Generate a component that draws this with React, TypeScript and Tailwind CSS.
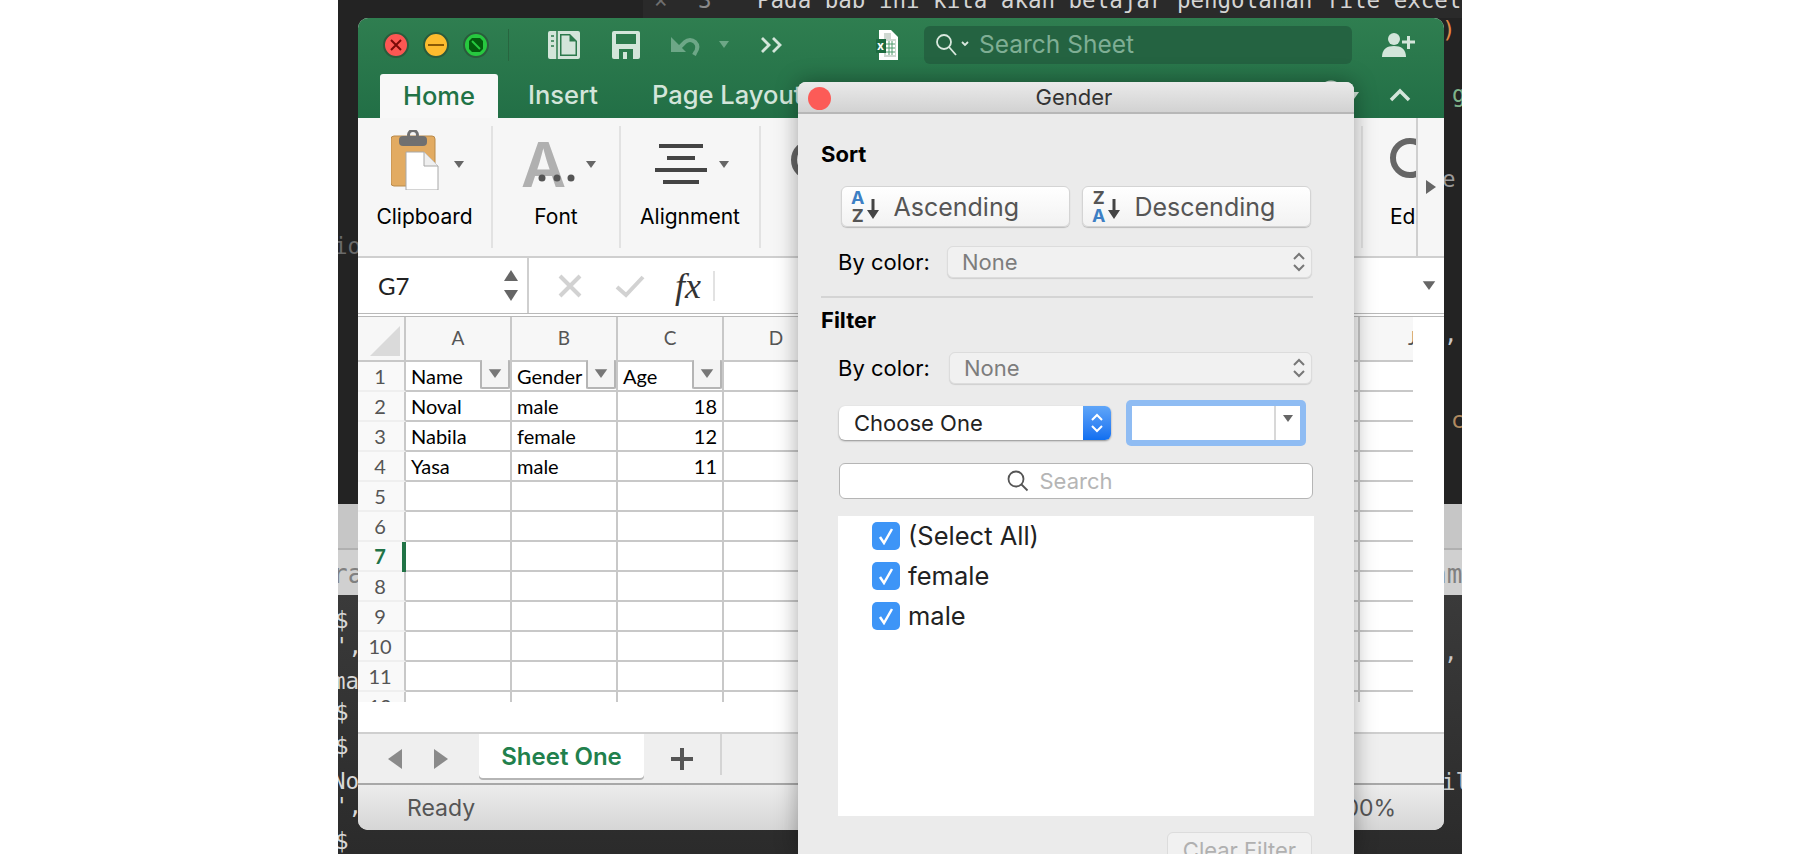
const uiFont = "font-['Inter','Liberation_Sans',sans-serif]";
const cellFont = "font-['Lato','Open_Sans',sans-serif]";
const codeFont = "font-['DejaVu_Sans_Mono','Liberation_Mono',monospace]";

const columns = ["A", "B", "C", "D", "E", "F", "G", "H", "I", "J"];
const rows: { n: number; a?: string; b?: string; c?: string }[] = [
  { n: 1, a: "Name", b: "Gender", c: "Age" },
  { n: 2, a: "Noval", b: "male", c: "18" },
  { n: 3, a: "Nabila", b: "female", c: "12" },
  { n: 4, a: "Yasa", b: "male", c: "11" },
  { n: 5 }, { n: 6 }, { n: 7 }, { n: 8 }, { n: 9 }, { n: 10 }, { n: 11 }, { n: 12 },
];

const codeBits = [
  { text: "×", cls: "left-[316px] top-[-14px] text-[#6f6f6f]" },
  { text: "3", cls: "left-[360px] top-[-14px] text-[#8a8a8a]" },
  { text: "Pada bab ini kita akan belajar pengolahan file excel", cls: "left-[419px] top-[-14px] text-[#d4d4d4]" },
  { text: ")", cls: "left-[1104px] top-[16px] text-[#e08a45]" },
  { text: "g", cls: "left-[1114px] top-[80px] text-[#7fb38a]" },
  { text: "e", cls: "left-[1104px] top-[165px] text-[#9a9a9a]" },
  { text: ",", cls: "left-[1106px] top-[320px] text-[#c8c8c8]" },
  { text: "c", cls: "left-[1113px] top-[406px] text-[#b08a60]" },
  { text: "am", cls: "left-[1093px] top-[560px] text-[26px] text-[#808080]" },
  { text: ",", cls: "left-[1106px] top-[638px] text-[#c8c8c8]" },
  { text: "il", cls: "left-[1104px] top-[768px] text-[#c8c8c8]" },
  { text: "io", cls: "left-[-4px] top-[232px] text-[#6a6a6a]" },
  { text: "ra", cls: "left-[-6px] top-[560px] text-[26px] text-[#808080]" },
  { text: "$", cls: "left-[-3px] top-[606px] text-[#d8d8d8]" },
  { text: "',", cls: "left-[-3px] top-[632px] text-[#d8d8d8]" },
  { text: "ma", cls: "left-[-6px] top-[667px] text-[#d8d8d8]" },
  { text: "$", cls: "left-[-3px] top-[698px] text-[#d8d8d8]" },
  { text: "$", cls: "left-[-3px] top-[732px] text-[#d8d8d8]" },
  { text: "No", cls: "left-[-6px] top-[767px] text-[#d8d8d8]" },
  { text: "',", cls: "left-[-3px] top-[792px] text-[#d8d8d8]" },
  { text: "$", cls: "left-[-3px] top-[827px] text-[#d8d8d8]" },
];

function Caret({ color = "#666", className = "" }: { color?: string; className?: string }) {
  return (
    <svg width="12" height="9" viewBox="0 0 12 9" className={className}>
      <path d="M1 1h10L6 8z" fill={color} />
    </svg>
  );
}

function Updown({ color = "#777" }: { color?: string }) {
  return (
    <svg width="14" height="22" viewBox="0 0 14 22" fill="none" stroke={color} strokeWidth="2">
      <path d="M2 8l5-5 5 5M2 14l5 5 5-5" />
    </svg>
  );
}

function TrafficLights() {
  return (
    <div className="flex items-center gap-[14px]">
      <div className="flex h-[26px] w-[26px] items-center justify-center rounded-full border-2 border-[#2a5c3c] bg-[#fc5753]">
        <svg width="12" height="12" viewBox="0 0 12 12" stroke="#7a0a08" strokeWidth="2">
          <path d="M1 1l10 10M11 1L1 11" />
        </svg>
      </div>
      <div className="flex h-[26px] w-[26px] items-center justify-center rounded-full border-2 border-[#2a5c3c] bg-[#fdbc2e]">
        <div className="h-[2px] w-[16px] bg-[#8a5a05]" />
      </div>
      <div className="flex h-[26px] w-[26px] items-center justify-center rounded-full border-2 border-[#2a5c3c] bg-[#27c83f]">
        <svg width="16" height="16" viewBox="0 0 16 16">
          <path d="M4 1h8l3 3v8l-3 3H4l-3-3V4z" fill="#035c0d" />
          <path d="M4 4l8 8" stroke="#27c83f" strokeWidth="2" />
        </svg>
      </div>
    </div>
  );
}

function TitleBar() {
  return (
    <div className="flex h-[52px] items-center pl-[25px] pt-[1px]">
      <TrafficLights />
      <div className="ml-[19px] h-[32px] w-[1px] bg-[#27653f]" />
      {/* sidebar doc */}
      <svg width="32" height="28" viewBox="0 0 32 28" className="ml-[39px]">
        <rect x="0" y="0" width="32" height="28" rx="2" fill="#d3e5da" />
        <path d="M9 0v28" stroke="#2c7a4d" strokeWidth="1.5" />
        <path d="M3 5h3M3 10h3M3 15h3" stroke="#2c7a4d" strokeWidth="1.5" />
        <path d="M12 3h10l7 7v15H12z" fill="#2c7a4d" />
        <path d="M13.5 4.500h8v6h6v13h-14z" fill="#d3e5da" />
      </svg>
      {/* save */}
      <svg width="28" height="28" viewBox="0 0 28 28" className="ml-[32px]">
        <path d="M2 0h24a2 2 0 012 2v24a2 2 0 01-2 2H2a2 2 0 01-2-2V2a2 2 0 012-2z" fill="#d3e5da" />
        <rect x="4" y="3" width="20" height="10" fill="#2c7a4d" />
        <rect x="7" y="18" width="14" height="10" fill="#2c7a4d" />
        <rect x="11" y="21" width="4" height="7" fill="#d3e5da" />
      </svg>
      {/* undo */}
      <svg width="32" height="24" viewBox="0 0 32 24" fill="none" className="ml-[31px]">
        <path d="M8 15l6-6a7 7 0 0110 0c3 3 3 7 0 11l-1 2" stroke="#6da787" strokeWidth="4" />
        <path d="M0 4v15h15z" fill="#6da787" />
      </svg>
      <Caret color="#6da787" className="ml-[15px]" />
      {/* overflow chevrons */}
      <svg width="24" height="18" viewBox="0 0 24 18" fill="none" stroke="#d3e5da" strokeWidth="2.800" className="ml-[30px]">
        <path d="M2 2l7 7-7 7M13 2l7 7-7 7" />
      </svg>
      {/* excel document */}
      <div className="relative ml-[92px] h-[30px] w-[22px]">
        <svg width="22" height="30" viewBox="0 0 22 30">
          <path d="M3 0h12l7 7v23H3z" fill="#fff" />
          <path d="M8 3h7v6h5v18H8z" fill="#cfd8d2" />
          <path d="M10 11h9v14h-9z" fill="#fff" />
          <path d="M10 14h9M10 18h9M10 22h9M13 11v14M16 11v14" stroke="#4f9a6d" strokeWidth="1" />
          <rect x="0" y="9" width="10" height="14" fill="#1d6b40" />
        </svg>
        <span className={`absolute left-[1px] top-[9px] text-[12px] font-bold leading-[14px] text-white ${uiFont}`}>x</span>
      </div>
      {/* search */}
      <div className="ml-[26px] flex h-[38px] w-[428px] items-center rounded-[6px] bg-[#246341] pl-[11px]">
        <svg width="36" height="24" viewBox="0 0 36 24" fill="none" stroke="#d9e8de" strokeWidth="1.800">
          <circle cx="9" cy="9" r="7" />
          <path d="M14 14l7 8" />
          <path d="M27 9l3 3 3-3" />
        </svg>
        <span className={`ml-[8px] text-[24.500px] leading-none text-[#7fae94] ${uiFont}`}>Search Sheet</span>
      </div>
      {/* share */}
      <svg width="34" height="26" viewBox="0 0 34 26" className="ml-[30px]">
        <circle cx="12" cy="7" r="6" fill="#d3e5da" />
        <path d="M0 25c0-8 5-11 12-11s12 3 12 11z" fill="#d3e5da" />
        <path d="M20 10h13M26.500 4v13" stroke="#d3e5da" strokeWidth="3" />
      </svg>
    </div>
  );
}

function RibbonTabs() {
  return (
    <div className="relative flex h-[48px] items-end pl-[22px]">
      <div className={`flex h-[44px] w-[118px] items-center justify-center rounded-t-[3px] bg-[#f8f8f8] text-[25.500px] font-medium text-[#217346] ${uiFont}`}>Home</div>
      <span className={`ml-[30px] mb-[4px] text-[25.500px] font-medium text-[#d3e5da] ${uiFont}`}>Insert</span>
      <span className={`ml-[54px] mb-[4px] whitespace-nowrap text-[25.500px] font-medium text-[#d3e5da] ${uiFont}`}>Page Layout</span>
      <div className="ml-auto mb-[12px] flex items-center">
        <svg width="26" height="26" viewBox="0 0 26 26" fill="none" stroke="#d3e5da" strokeWidth="3" className="mr-[4px] -mt-[4px]">
          <circle cx="13" cy="13" r="11" />
        </svg>
        <Caret color="#d3e5da" className="mr-[28px]" />
        <svg width="24" height="14" viewBox="0 0 24 14" fill="none" stroke="#d3e5da" strokeWidth="3.500" className="mr-[32px]">
          <path d="M3 12l9-9 9 9" />
        </svg>
      </div>
    </div>
  );
}

function RibbonLabel({ children }: { children: React.ReactNode }) {
  return <div className={`absolute bottom-[19px] left-0 right-0 text-center text-[21px] leading-[24px] text-black ${uiFont}`}>{children}</div>;
}

function Ribbon() {
  return (
    <div className="flex h-[140px] border-b-2 border-[#cfcfcf] bg-[#f6f6f6] py-[8px]">
      <div className="relative w-[135px] border-r-2 border-[#e2e2e2]">
        {/* clipboard */}
        <svg width="50" height="60" viewBox="0 0 50 60" className="absolute left-[33px] top-[4px]">
          <rect x="0" y="6" width="44" height="50" rx="3" fill="#e2ab62" stroke="#b98a4a" />
          <rect x="8" y="6" width="28" height="10" rx="4" fill="#707070" />
          <circle cx="22" cy="5" r="4.500" fill="none" stroke="#707070" strokeWidth="3" />
          <path d="M15 22h18l14 14v24H15z" fill="#fff" stroke="#a8a8a8" />
          <path d="M33 22v14h14" fill="#efefef" stroke="#a8a8a8" />
        </svg>
        <Caret className="absolute left-[95px] top-[34px]" />
        <RibbonLabel>Clipboard</RibbonLabel>
      </div>
      <div className="relative w-[128px] border-r-2 border-[#e2e2e2]">
        <span className={`absolute left-[28px] top-[4px] text-[62px] font-semibold leading-[70px] text-[#b0b0b0] ${uiFont}`}>A</span>
        <svg width="38" height="10" viewBox="0 0 38 10" className="absolute left-[45px] top-[47px]">
          <circle cx="4" cy="5" r="3.500" fill="#555" /><circle cx="19" cy="5" r="3.500" fill="#555" /><circle cx="33" cy="5" r="3.500" fill="#555" />
        </svg>
        <Caret className="absolute left-[92px] top-[34px]" />
        <RibbonLabel>Font</RibbonLabel>
      </div>
      <div className="relative w-[140px] border-r-2 border-[#e2e2e2]">
        <svg width="52" height="42" viewBox="0 0 52 42" className="absolute left-[34px] top-[18px]">
          <path d="M4 2h44M12 14h28M0 26h52M8 38h36" stroke="#444" strokeWidth="4" />
        </svg>
        <Caret className="absolute left-[97px] top-[34px]" />
        <RibbonLabel>Alignment</RibbonLabel>
      </div>
      <div className="relative w-[60px]">
        <div className="absolute left-[30px] top-[14px] h-[40px] w-[40px] rounded-full border-[6px] border-[#666]" />
        <RibbonLabel><span className="pl-[40px]">N</span></RibbonLabel>
      </div>
      <div className="flex-1" />
      <div className="relative w-[55px] overflow-hidden border-l-2 border-[#e2e2e2]">
        <div className="absolute left-[27px] top-[12px] h-[40px] w-[40px] rounded-full border-[6px] border-[#666]" />
        <div className={`absolute bottom-[19px] left-[27px] text-[21px] leading-[24px] text-black ${uiFont}`}>Ed</div>
      </div>
      <div className="-my-[8px] flex w-[28px] items-center justify-center border-l-2 border-[#cfcfcf]">
        <svg width="12" height="14" viewBox="0 0 12 14"><path d="M1 0l10 7-10 7z" fill="#666" /></svg>
      </div>
    </div>
  );
}

function FormulaBar() {
  return (
    <div className="flex h-[59px] border-b-[4px] border-double border-[#b9b9b9] bg-white">
      <div className="flex w-[171px] items-center justify-between border-r-2 border-[#cfcfcf] pl-[20px] pr-[9px]">
        <span className={`text-[24px] text-[#222] ${cellFont}`}>G7</span>
        <div className="flex flex-col gap-[9px]">
          <svg width="14" height="11" viewBox="0 0 14 11"><path d="M7 0l7 11H0z" fill="#666" /></svg>
          <svg width="14" height="11" viewBox="0 0 14 11"><path d="M0 0h14L7 11z" fill="#666" /></svg>
        </div>
      </div>
      <div className="flex flex-1 items-center pl-[29px]">
        <svg width="24" height="24" viewBox="0 0 24 24" stroke="#d2d2d2" strokeWidth="4"><path d="M2 2l20 20M22 2L2 22" /></svg>
        <svg width="30" height="24" viewBox="0 0 30 24" fill="none" stroke="#d2d2d2" strokeWidth="4" className="ml-[33px]"><path d="M2 13l9 8L28 3" /></svg>
        <span className="ml-[30px] font-['Liberation_Serif',serif] text-[36px] font-medium italic leading-none text-[#333]">fx</span>
        <div className="ml-[12px] h-[30px] w-[2px] bg-[#e2e2e2]" />
        <Caret className="ml-auto mr-[9px] scale-125" />
      </div>
    </div>
  );
}

function FilterButton() {
  return (
    <div className="absolute bottom-[1px] right-0 flex h-[29px] w-[30px] items-center justify-center rounded-[2px] border-2 border-t-0 border-[#b5b5b5] bg-[#f4f4f4]">
      <Caret color="#777" className="scale-125" />
    </div>
  );
}

function Sheet() {
  return (
    <div className="h-[415px] bg-white">
      <div className="h-[385px] w-[1055px] overflow-hidden">
        <div className="flex h-[45px]">
          <div className="flex w-[48px] shrink-0 items-end justify-end border-r-2 border-b-2 border-[#c8c8c8] bg-[#f7f7f7] pb-[4px] pr-[4px]">
            <svg width="30" height="30" viewBox="0 0 30 30"><path d="M30 0v30H0z" fill="#dadada" /></svg>
          </div>
          {columns.map((c) => (
            <div key={c} className={`flex w-[106px] shrink-0 items-center justify-center border-r-2 border-b-2 border-[#c8c8c8] bg-[#f7f7f7] text-[19px] text-[#555] ${cellFont}`}>{c}</div>
          ))}
        </div>
        {rows.map((r) => (
          <div key={r.n} className={`flex h-[30px] text-[20px] leading-[28px] text-black ${cellFont}`}>
            <div className={`relative w-[48px] shrink-0 border-r-2 border-b-2 border-r-[#c8c8c8] border-b-[#efefef] bg-[#f9f9f9] pr-[10px] text-center ${r.n === 7 ? "font-bold text-[#217346]" : "text-[#555]"}`}>
              <span className="block pl-[8px]">{r.n}</span>
              {r.n === 7 && <div className="absolute -right-[2px] top-0 h-[30px] w-[4px] bg-[#217346]" />}
            </div>
            {columns.map((c, i) => (
              <div key={c} className="relative w-[106px] shrink-0 border-r-2 border-b-2 border-[#c8c8c8] px-[5px]">
                {i === 0 && r.a}
                {i === 1 && r.b}
                {i === 2 && <span className={r.n > 1 ? "block text-right" : ""}>{r.c}</span>}
                {r.n === 1 && i < 3 && <FilterButton />}
              </div>
            ))}
          </div>
        ))}
      </div>
    </div>
  );
}

function TabStrip() {
  return (
    <div className="flex h-[53px] border-y-2 border-t-[#cfcfcf] border-b-[#a8a8a8] bg-[#efefef]">
      <div className="flex w-[121px] items-center pl-[30px]">
        <svg width="14" height="20" viewBox="0 0 14 20"><path d="M14 0v20L0 10z" fill="#8a8a8a" /></svg>
        <svg width="14" height="20" viewBox="0 0 14 20" className="ml-[32px]"><path d="M0 0v20l14-10z" fill="#8a8a8a" /></svg>
      </div>
      <div className={`flex h-[44px] w-[165px] items-center justify-center rounded-b-[4px] bg-white pt-[2px] text-[24px] font-semibold text-[#21804c] shadow-[0_2px_0_#b5b5b5] ${uiFont}`}>Sheet One</div>
      <div className="flex w-[76px] items-center justify-center">
        <svg width="22" height="22" viewBox="0 0 22 22"><path d="M11 0v22M0 11h22" stroke="#555" strokeWidth="4" /></svg>
      </div>
      <div className="mb-[8px] w-[2px] bg-[#d4d4d4]" />
    </div>
  );
}

function StatusBar() {
  return (
    <div className={`flex h-[45px] items-center justify-between bg-gradient-to-b from-[#ececec] to-[#d6d6d6] pl-[49px] pr-[48px] pt-[2px] text-[23px] text-[#555] ${uiFont}`}>
      <span>Ready</span>
      <span>100%</span>
    </div>
  );
}

function ExcelWindow() {
  return (
    <div className="absolute left-[20px] top-[18px] h-[812px] w-[1086px] overflow-hidden rounded-[10px] bg-white">
      <div className="bg-gradient-to-b from-[#2f7e50] to-[#226f46]">
        <TitleBar />
        <RibbonTabs />
      </div>
      <Ribbon />
      <FormulaBar />
      <Sheet />
      <TabStrip />
      <StatusBar />
    </div>
  );
}

function SortButton({ first, second, label }: { first: string; second: string; label: string }) {
  const letter = "font-bold leading-[18px] text-[18px] " + uiFont;
  return (
    <div className="flex h-[41px] w-[229px] items-center rounded-[6px] border border-[#d4d4d4] bg-gradient-to-b from-white to-[#f2f2f2] pl-[9px] shadow-[0_1px_1px_rgba(0,0,0,0.2)]">
      <div className="flex flex-col items-center">
        <span className={`${letter} ${first === "A" ? "text-[#3d7fc4]" : "text-[#555]"}`}>{first}</span>
        <span className={`${letter} ${second === "A" ? "text-[#3d7fc4]" : "text-[#555]"}`}>{second}</span>
      </div>
      <svg width="12" height="20" viewBox="0 0 12 20" className="ml-[3px] mt-[4px]">
        <path d="M4.500 0h3v11H12l-6 9-6-9h4.500z" fill="#444" />
      </svg>
      <span className={`ml-[14px] pt-[2px] text-[25px] text-[#555] ${uiFont}`}>{label}</span>
    </div>
  );
}

function ColorRow({ selectWidth }: { selectWidth: string }) {
  return (
    <div className="flex items-center justify-between pl-[17px] pr-[1px]">
      <span className={`text-[22px] leading-[32px] text-black ${uiFont}`}>By color:</span>
      <div className={`flex h-[32px] ${selectWidth} items-center justify-between rounded-[6px] border border-[#dcdcdc] bg-[#f1f1f1] pl-[14px] pr-[5px] shadow-[0_1px_1px_rgba(0,0,0,0.12)]`}>
        <span className={`text-[22px] text-[#7d7d7d] ${uiFont}`}>None</span>
        <Updown />
      </div>
    </div>
  );
}

function CheckRow({ label }: { label: string }) {
  return (
    <div className="flex h-[28px] items-center">
      <div className="flex h-[28px] w-[28px] items-center justify-center rounded-[5px] bg-[#3d95f7]">
        <svg width="18" height="18" viewBox="0 0 18 18" fill="none" stroke="#fff" strokeWidth="2.500"><path d="M3 10l4 6 8-14" /></svg>
      </div>
      <span className={`ml-[8px] text-[25.500px] leading-none text-[#222] ${uiFont}`}>{label}</span>
    </div>
  );
}

function FilterDialog() {
  return (
    <div className="absolute left-[460px] top-[82px] h-[772px] w-[556px] rounded-t-[8px] bg-[#ebebeb] shadow-[0_0_22px_rgba(0,0,0,0.35)]">
      <div className="relative flex h-[32px] items-center justify-center rounded-t-[8px] border-b-2 border-[#b7b7b7] bg-gradient-to-b from-[#eaeaea] to-[#d2d2d2]">
        <div className="absolute left-[10px] top-[5px] h-[23px] w-[23px] rounded-full bg-[#fc5b57]" />
        <span className={`-ml-[4px] text-[22px] leading-[30px] text-[#333] ${uiFont}`}>Gender</span>
      </div>
      <div className="pl-[23px] pr-[41px]">
        <div className={`mt-[28px] text-[22px] font-bold leading-[24px] text-black ${uiFont}`}>Sort</div>
        <div className="mt-[20px] flex justify-between pl-[20px] pr-[2px]">
          <SortButton first="A" second="Z" label="Ascending" />
          <SortButton first="Z" second="A" label="Descending" />
        </div>
        <div className="mt-[19px]">
          <ColorRow selectWidth="w-[365px]" />
        </div>
        <div className="mt-[18px] h-[2px] bg-[#d4d4d4]" />
        <div className={`mt-[10px] text-[22px] font-bold leading-[24px] text-black ${uiFont}`}>Filter</div>
        <div className="mt-[20px]">
          <ColorRow selectWidth="w-[363px]" />
        </div>
        <div className="mt-[16px] flex items-center pl-[18px]">
          <div className="flex h-[34px] w-[272px] items-center justify-between rounded-[6px] bg-white pl-[15px] shadow-[0_1px_2px_rgba(0,0,0,0.4)]">
            <span className={`text-[22px] text-[#222] ${uiFont}`}>Choose One</span>
            <div className="flex h-[34px] w-[28px] items-center justify-center rounded-r-[6px] bg-gradient-to-b from-[#5fa5f8] to-[#0f6ff0]">
              <Updown color="#fff" />
            </div>
          </div>
          <div className="ml-[15px] flex h-[46px] w-[180px] rounded-[5px] bg-[#8fbcf3] p-[6px]">
            <div className="flex-1 bg-white" />
            <div className="flex w-[26px] justify-center border-l-2 border-[#d8d8d8] bg-white pt-[8px]">
              <Caret />
            </div>
          </div>
        </div>
        <div className="ml-[18px] mt-[17px] flex h-[36px] w-[474px] items-center justify-center rounded-[6px] border border-[#b5b5b5] bg-white pr-[32px]">
          <svg width="22" height="22" viewBox="0 0 22 22" fill="none" stroke="#555" strokeWidth="1.800">
            <circle cx="9" cy="9" r="7.500" />
            <path d="M14.500 14.500l6 6" />
          </svg>
          <span className={`ml-[10px] text-[22px] text-[#b5b5b5] ${uiFont}`}>Search</span>
        </div>
        <div className="ml-[17px] mt-[17px] flex h-[300px] w-[476px] flex-col gap-[12px] bg-white pl-[34px] pt-[6px]">
          <CheckRow label="(Select All)" />
          <CheckRow label="female" />
          <CheckRow label="male" />
        </div>
        <div className="mt-[16px] flex justify-end pr-[1px]">
          <div className={`flex h-[36px] w-[145px] items-center justify-center rounded-[6px] border border-[#dcdcdc] bg-[#f1f1f1] text-[22px] text-[#b0b0b0] ${uiFont}`}>Clear Filter</div>
        </div>
      </div>
    </div>
  );
}

export default function App() {
  return (
    <div className="h-[854px] w-full overflow-hidden bg-white">
      <div className="relative mx-auto flex h-[854px] w-[1124px] flex-col overflow-hidden">
        <div className="h-[504px] bg-[#232323]">
          <div className="ml-[305px] h-[18px] bg-[#2a2a2a]" />
        </div>
        <div className="h-[46px] border-b-2 border-[#b0b0b0] bg-[#c6c6c6]" />
        <div className="h-[45px] bg-[#d0d0d0]" />
        <div className="flex-1 bg-gradient-to-b from-[#3a3a3a] to-[#2b2b2b]" />
        {codeBits.map((b, i) => (
          <span key={i} className={`absolute whitespace-pre text-[22.500px] leading-[28px] ${codeFont} ${b.cls}`}>{b.text}</span>
        ))}
        <ExcelWindow />
        <FilterDialog />
      </div>
    </div>
  );
}
